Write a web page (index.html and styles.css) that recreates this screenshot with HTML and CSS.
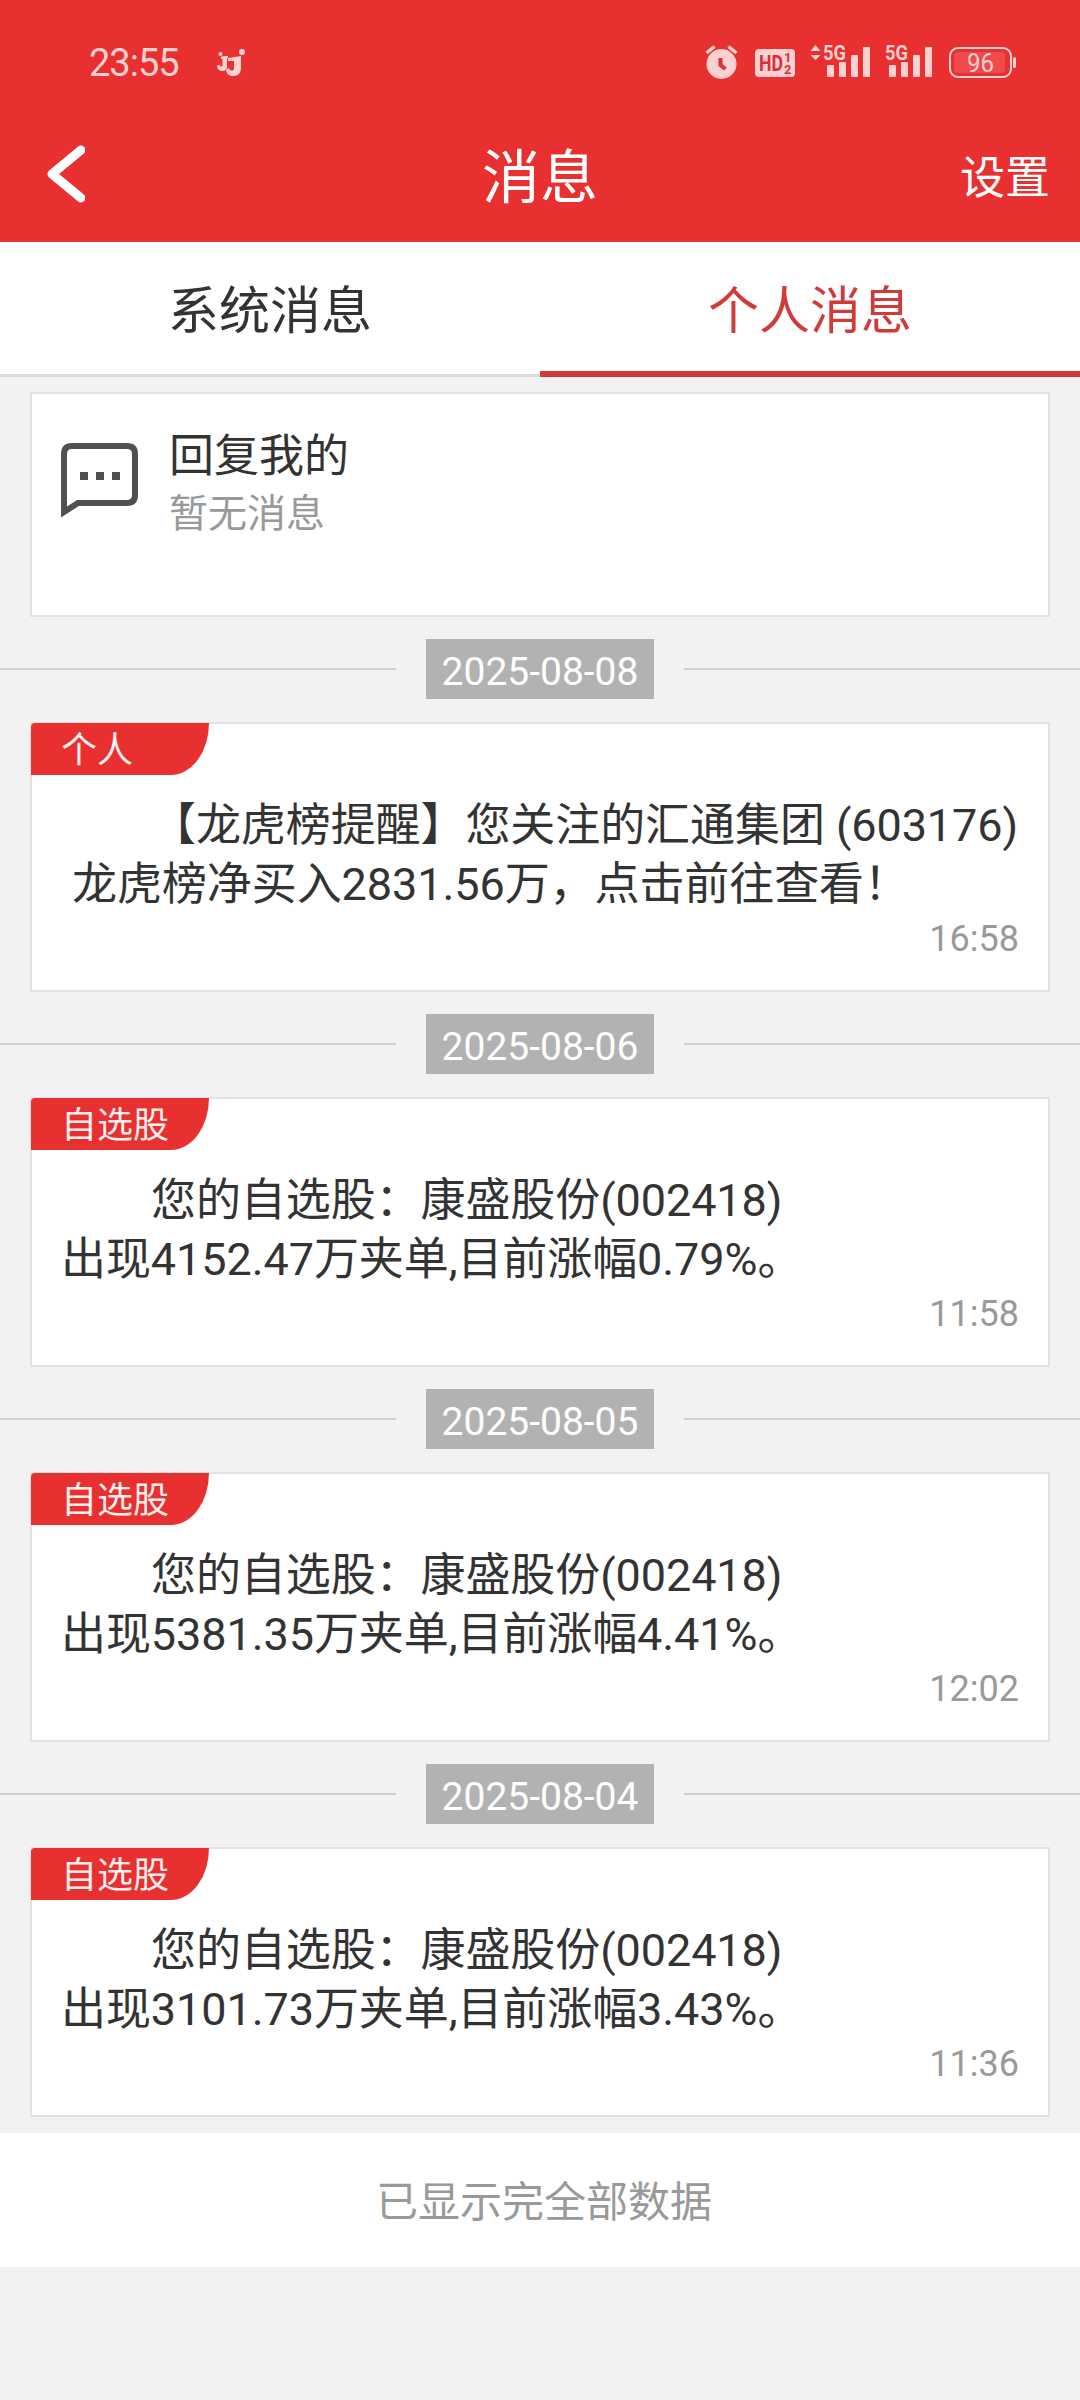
FILE: index.html
```html
<!DOCTYPE html>
<html lang="zh-CN">
<head>
  <meta charset="UTF-8">
  <meta name="viewport" content="width=device-width, initial-scale=1.0">
  <title>消息</title>
  <link rel="stylesheet" href="styles.css">
</head>
<body>

  <header class="header">
    <!-- 状态栏 -->
    <div class="status">
      <span class="clock">23:55</span>
      <svg class="app-icon" width="28" height="28" viewBox="0 0 28 28">
        <circle cx="3.500" cy="6" r="2"/>
        <circle cx="25" cy="4" r="3"/>
        <path d="M4 8.500l7-.8v2.300h-1v9c0 2.500-2 4-4.500 4S0 21 0 18l2.500-1.500c.5 1.500 1 2 2 2s1-.5 1-1.500v-6H4z"/>
        <path d="M11 10l13-2v12c0 5-3 8-7.500 8-4 0-7-2-7.500-6l2.500-2c1.500 2 2.500 2.500 3.500 2.500s2-.5 2-2.500v-7h-6z"/>
      </svg>
      <div class="status-icons">
        <svg width="34" height="40" viewBox="0 0 34 40">
          <circle cx="16.500" cy="22" r="15"/>
          <path class="line" d="M1.500 11l8-6.500M23.500 4.500l8 6.500" stroke-width="3.500"/>
          <path class="hand" d="M15.500 16v7l5 4"/>
        </svg>
        <svg class="hd" width="40" height="40" viewBox="0 0 40 40">
          <rect x="0" y="7" width="40" height="28" rx="4"/>
          <text x="4" y="29" font-size="22" textLength="24" lengthAdjust="spacingAndGlyphs">HD</text>
          <text x="29" y="20" font-size="13">1</text>
          <text x="29" y="32" font-size="13">2</text>
        </svg>
        <svg class="signal" width="60" height="40" viewBox="0 0 60 40">
          <path d="M5.500 3l5 6h-10zM5.500 18l5-5h-10z"/>
          <text x="13" y="18" font-size="21" textLength="23" lengthAdjust="spacingAndGlyphs">5G</text>
          <rect x="17" y="23" width="7" height="12" rx="1"/>
          <rect x="29" y="20" width="7" height="15" rx="1"/>
          <rect x="41" y="13" width="7" height="22" rx="1"/>
          <rect x="53" y="5" width="7" height="30" rx="1"/>
        </svg>
        <svg class="signal" width="48" height="40" viewBox="0 0 48 40">
          <text x="0" y="18" font-size="21" textLength="23" lengthAdjust="spacingAndGlyphs">5G</text>
          <rect x="4" y="23" width="7" height="12" rx="1"/>
          <rect x="16" y="20" width="7" height="15" rx="1"/>
          <rect x="28" y="13" width="7" height="22" rx="1"/>
          <rect x="40" y="5" width="7" height="30" rx="1"/>
        </svg>
        <svg class="battery" width="67" height="40" viewBox="0 0 67 40">
          <rect class="line" x="1" y="6" width="61" height="29" rx="8" stroke-width="2"/>
          <rect class="level" x="5" y="10" width="51" height="21" rx="4"/>
          <rect x="64" y="15" width="3" height="11" rx="1.500"/>
          <text x="18" y="30" font-size="25" textLength="27" lengthAdjust="spacingAndGlyphs">96</text>
        </svg>
      </div>
    </div>

    <div class="nav">
      <svg class="back" width="40" height="60" viewBox="0 0 40 60">
        <path d="M36 7L7 31L36 55"/>
      </svg>
      <h1>消息</h1>
      <span class="settings">设置</span>
    </div>
  </header>

  <div class="tabs">
    <div class="tab">系统消息</div>
    <div class="tab active">个人消息</div>
  </div>

  <main class="list">
    <div class="card reply">
      <svg width="78" height="76" viewBox="0 0 78 76">
        <path d="M3 69V11q0-8 8-8h55q8 0 8 8v41q0 8-8 8H17z" fill="none" stroke="#505050" stroke-width="6"/>
        <path d="M19 29h8v8h-8zM35 29h8v8h-8zM51 29h8v8h-8z" fill="#505050"/>
      </svg>
      <div>
        <div class="reply-title">回复我的</div>
        <div class="reply-sub">暂无消息</div>
      </div>
    </div>

    <div class="date"><span>2025-08-08</span></div>
    <div class="card">
      <span class="tag">个人</span>
      <p class="text">【龙虎榜提醒】您关注的汇通集团 (603176)<br>&nbsp;龙虎榜净买入2831.56万，点击前往查看！</p>
      <div class="time">16:58</div>
    </div>

    <div class="date"><span>2025-08-06</span></div>
    <div class="card">
      <span class="tag">自选股</span>
      <p class="text">您的自选股：康盛股份(002418)<br>出现4152.47万夹单,目前涨幅0.79%。</p>
      <div class="time">11:58</div>
    </div>

    <div class="date"><span>2025-08-05</span></div>
    <div class="card">
      <span class="tag">自选股</span>
      <p class="text">您的自选股：康盛股份(002418)<br>出现5381.35万夹单,目前涨幅4.41%。</p>
      <div class="time">12:02</div>
    </div>

    <div class="date"><span>2025-08-04</span></div>
    <div class="card">
      <span class="tag">自选股</span>
      <p class="text">您的自选股：康盛股份(002418)<br>出现3101.73万夹单,目前涨幅3.43%。</p>
      <div class="time">11:36</div>
    </div>
  </main>

  <div class="end">已显示完全部数据</div>

</body>
</html>
```
FILE: styles.css
```css
* {
  box-sizing: border-box;
}

body {
  margin: 0;
  background-color: #f2f2f2;
  color: #333;
  font-family: Roboto, "Noto Sans CJK SC", sans-serif;
}

svg {
  display: block;
}

/* 顶部 */
.header {
  height: 242px;
  background-color: #e83030;
  color: #fff;
}

.status {
  display: flex;
  align-items: center;
  height: 104px;
  padding: 20px 64px 0 89px;
  color: #ffd0d0;
  fill: #ffd0d0;
}

.clock {
  width: 128px;
  padding-top: 2px;
  font-size: 38px;
  line-height: 44px;
  letter-spacing: -1px;
}

.status-icons {
  display: flex;
  margin-left: auto;
}

.status-icons svg + svg {
  margin-left: 16px;
}

.status-icons svg.signal {
  margin-left: 15px;
}

.status-icons .line {
  fill: none;
  stroke: #ffd0d0;
}

.hand {
  fill: none;
  stroke: #d83038;
  stroke-width: 4;
}

.hd text {
  fill: #d83038;
  font-weight: bold;
}

.signal text {
  font-weight: bold;
}

.battery .level {
  fill: #f04a4c;
}

.nav {
  display: flex;
  align-items: center;
  justify-content: space-between;
  height: 138px;
  padding: 0 30px 0 45px;
}

.back {
  margin-right: 35px;
}

.back path {
  fill: none;
  stroke: #fff;
  stroke-width: 9;
  stroke-linecap: round;
  stroke-linejoin: round;
}

.nav h1 {
  margin: 0;
  padding-top: 10px;
  font-size: 58px;
  font-weight: 400;
  line-height: 70px;
}

.settings {
  padding-top: 3px;
  font-size: 45px;
}

/* 标签页 */
.tabs {
  display: flex;
  height: 135px;
  background-color: #fff;
}

.tab {
  flex: 1;
  border-bottom: 3px solid #dcdcdc;
  font-size: 51px;
  line-height: 139px;
  text-align: center;
}

.tab.active {
  border-bottom: 6px solid #d53a3a;
  color: #d03a38;
}

/* 消息列表 */
.list {
  padding: 15px 0 16px;
}

.card {
  height: 270px;
  margin: 0 30px;
  border: 2px solid #e2e2e2;
  background-color: #fff;
}

.reply {
  display: flex;
  gap: 30px;
  height: 225px;
  padding: 33px 29px;
}

.reply svg {
  margin-top: 16px;
}

.reply-title {
  font-size: 45px;
  line-height: 60px;
}

.reply-sub {
  color: #999;
  font-size: 39px;
  line-height: 54px;
}

.date {
  display: flex;
  align-items: center;
  gap: 30px;
  margin: 22px 0 23px;
}

.date::before,
.date::after {
  content: "";
  flex: 1;
  height: 2px;
  background-color: #d0d0d0;
}

.date span {
  width: 228px;
  height: 60px;
  background-color: #b2b2b2;
  color: #fff;
  font-size: 39px;
  line-height: 66px;
  text-align: center;
}

.tag {
  display: block;
  width: 178px;
  height: 52px;
  margin: -1px 0 0 -1px;
  padding-left: 30px;
  border-radius: 4px 0 38px 0 / 4px 0 52px 0;
  background-color: #e83030;
  color: #fff0ee;
  font-size: 36px;
  line-height: 57px;
}

.text {
  margin: 21px 0 0 29px;
  font-size: 45px;
  line-height: 59px;
  letter-spacing: -0.08px;
  text-indent: 2em;
  white-space: nowrap;
}

.time {
  margin: 1px 29px 0;
  color: #999;
  font-size: 36px;
  line-height: 48px;
  text-align: right;
}

.end {
  height: 134px;
  padding-left: 8px;
  background-color: #fff;
  color: #999;
  font-size: 42px;
  line-height: 139px;
  text-align: center;
}
```
